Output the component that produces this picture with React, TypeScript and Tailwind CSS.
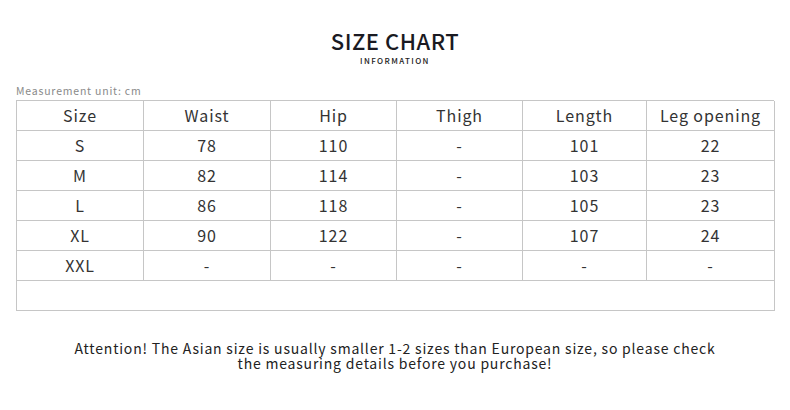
const columns = ["Size", "Waist", "Hip", "Thigh", "Length", "Leg opening"];

const rows = [
  ["S", "78", "110", "-", "101", "22"],
  ["M", "82", "114", "-", "103", "23"],
  ["L", "86", "118", "-", "105", "23"],
  ["XL", "90", "122", "-", "107", "24"],
  ["XXL", "-", "-", "-", "-", "-"],
];

const font = { fontFamily: '"Noto Sans CJK SC", "Noto Sans", sans-serif' };

export default function App() {
  return (
    <main className="h-[410px] w-[790px] bg-white text-[#333]" style={font}>
      {/* Heading */}
      <div className="flex flex-col items-center pt-[26px]">
        <h1 className="h-[28px] text-[22px] leading-[28px] font-medium tracking-[0.5px] text-[#1a1a22]">
          SIZE CHART
        </h1>
        <p className="mt-[1px] h-[11px] text-[8px] leading-[11px] font-medium tracking-[1.4px] text-[#222]">
          INFORMATION
        </p>
      </div>

      {/* Chart */}
      <div className="ml-[16px] mt-[16px]">
        <p className="h-[18px] text-[10.5px] leading-[18px] tracking-[0.8px] text-[#8a8a8a]">
          Measurement unit: cm
        </p>
        <div className="grid w-[758px] grid-cols-[127px_127px_126px_126px_124px_128px] border-l border-t border-[#c6c6c6]">
          {columns.map((c) => (
            <div
              key={c}
              className="flex h-[30px] items-center justify-center border-b border-r border-[#c6c6c6] pb-[2px] text-[16px] tracking-[0.9px]"
            >
              {c}
            </div>
          ))}
          {rows.map((r) =>
            r.map((v, i) => (
              <div
                key={r[0] + i}
                className="flex h-[30px] items-center justify-center border-b border-r border-[#c6c6c6] pb-[2px] text-[16px] tracking-[0.9px]"
              >
                {v}
              </div>
            ))
          )}
          <div className="col-span-6 h-[30px] border-b border-r border-[#c6c6c6]" />
        </div>
      </div>

      {/* Note */}
      <p className="mt-[30px] text-center text-[14px] leading-[15px] tracking-[0.8px] text-[#222]">
        Attention! The Asian size is usually smaller 1-2 sizes than European size, so please check
        <br />
        the measuring details before you purchase!
      </p>
    </main>
  );
}
